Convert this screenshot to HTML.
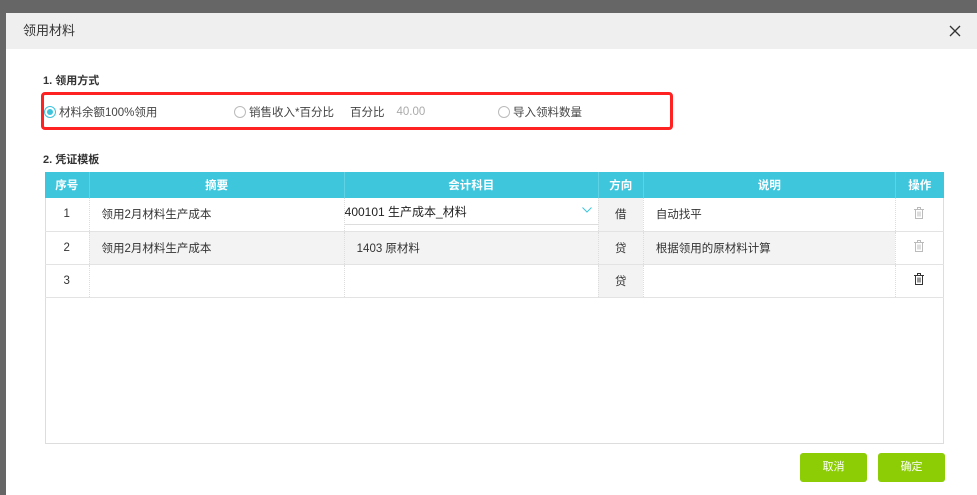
<!DOCTYPE html>
<html><head><meta charset="utf-8"><style>
*{box-sizing:border-box;margin:0;padding:0}
body{width:977px;height:495px;background:#666;position:relative;overflow:hidden;font-family:"Liberation Sans","Noto Sans CJK SC",sans-serif;font-size:12px;color:#333}
.dlg{position:absolute;left:6px;top:13px;width:971px;height:482px;background:#fff}
.hd{height:36px;background:#efefef;padding-left:17px;line-height:36px;font-size:13px;color:#333;position:relative}
.x{position:absolute;right:16px;top:12px;width:12px;height:12px}
.t{position:absolute;font-size:11px;font-weight:bold;color:#333}
.box{position:absolute;left:35px;top:79px;width:632px;height:38px;border:3px solid #f22;border-radius:4px}
.r{position:absolute;top:91px;font-size:11.5px;color:#444;display:flex;align-items:center}
.rd{width:12px;height:12px;border:1px solid #bbb;border-radius:50%;margin-right:3px;background:#fff;position:relative}
.rd.on{border-color:#3ec3dd}
.rd.on:after{content:"";position:absolute;left:2px;top:2px;width:6px;height:6px;border-radius:50%;background:#3ec3dd}
table{position:absolute;left:39px;top:159px;width:899px;border-collapse:collapse;font-size:11.5px}
th{background:#3ec6dd;color:#fff;height:26px;font-weight:bold;border-right:1px solid #5fd3e6}
td{height:33px;border-bottom:1px solid #e3e3e3;border-right:1px dotted #ddd;text-align:center}
td.l{text-align:left;padding-left:12px}
.g{background:#f3f3f3}
.wrap{position:absolute;left:39px;top:159px;width:899px;height:272px;border:1px solid #ddd}
.btn{position:absolute;top:440px;width:67px;height:29px;background:#8ccd05;color:#fff;border-radius:3px;text-align:center;line-height:29px;font-size:11px}
</style></head><body>
<div class="dlg">
<div class="hd">领用材料<svg class="x" viewBox="0 0 12 12"><path d="M1 1L11 11M11 1L1 11" stroke="#333" stroke-width="1.3"/></svg></div>
<div class="t" style="left:37px;top:59px">1. 领用方式</div>
<div class="box"></div>
<div class="r" style="left:38px"><span class="rd on"></span>材料余额100%领用</div>
<div class="r" style="left:228px"><span class="rd"></span>销售收入*百分比<span style="margin-left:16px">百分比</span><span style="margin-left:12px;color:#aaa">40.00</span></div>
<div class="r" style="left:492px"><span class="rd"></span>导入领料数量</div>
<div class="t" style="left:37px;top:138px">2. 凭证模板</div>
<div class="wrap"></div>
<table>
<tr><th style="width:44px">序号</th><th style="width:255px">摘要</th><th style="width:254px">会计科目</th><th style="width:45px">方向</th><th style="width:252px">说明</th><th style="width:48px;border-right:0">操作</th></tr>
<tr><td>1</td><td class="l">领用2月材料生产成本</td><td style="text-align:left;position:relative"><div style="border-bottom:1px solid #ddd;height:26px;line-height:26px;font-size:12px;color:#222;margin-top:-4px">400101 生产成本_材料<svg style="position:absolute;right:6px;top:9px" width="10" height="6" viewBox="0 0 10 6"><path d="M0.5 0.5L5 5L9.5 0.5" fill="none" stroke="#3ec6dd"/></svg></div></td><td class="g">借</td><td class="l">自动找平</td><td><svg width="10" height="12" viewBox="0 0 10 12"><path d="M0 2.5H10M3.5 2.5V0.5H6.5V2.5M1.5 2.5V11.5H8.5V2.5M4 4.5V9.5M6 4.5V9.5" fill="none" stroke="#bbb"/></svg></td></tr>
<tr><td>2</td><td class="l g">领用2月材料生产成本</td><td class="l g">1403 原材料</td><td class="g">贷</td><td class="l g">根据领用的原材料计算</td><td><svg width="10" height="12" viewBox="0 0 10 12"><path d="M0 2.5H10M3.5 2.5V0.5H6.5V2.5M1.5 2.5V11.5H8.5V2.5M4 4.5V9.5M6 4.5V9.5" fill="none" stroke="#bbb"/></svg></td></tr>
<tr><td>3</td><td></td><td></td><td class="g">贷</td><td></td><td><svg width="10" height="12" viewBox="0 0 10 12"><path d="M0 2.5H10M3.5 2.5V0.5H6.5V2.5M1.5 2.5V11.5H8.5V2.5M4 4.5V9.5M6 4.5V9.5" fill="none" stroke="#333"/></svg></td></tr>
</table>
<div class="btn" style="left:794px">取消</div>
<div class="btn" style="left:872px">确定</div>
</div>
</body></html>
